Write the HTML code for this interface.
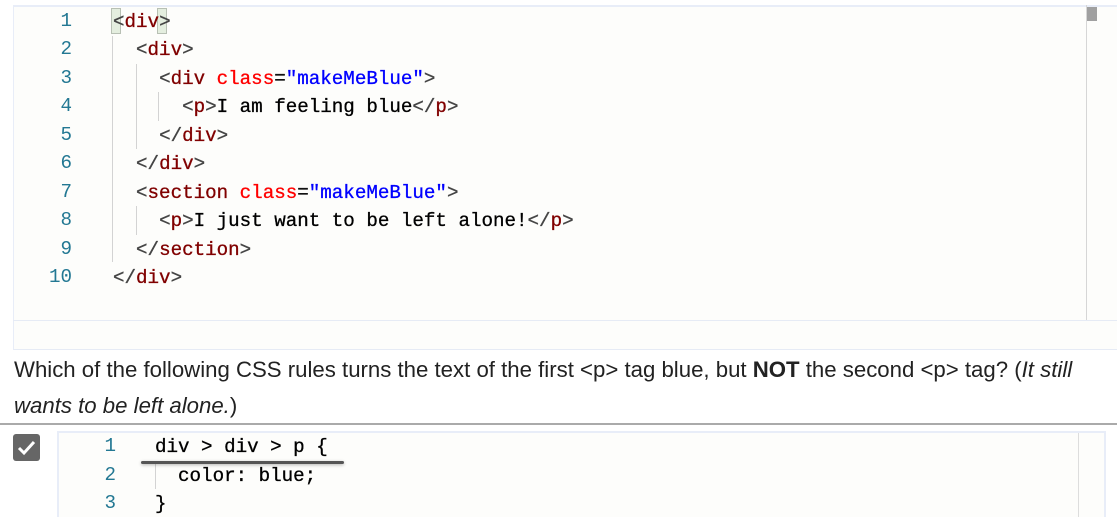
<!DOCTYPE html>
<html><head><meta charset="utf-8"><style>
body{margin:0;width:1117px;height:517px;background:#fff;position:relative;overflow:hidden;font-family:"Liberation Sans",sans-serif}
.ed{position:absolute;left:13px;top:5px;width:1104px;height:345px;background:#fdfdfb;border-top:2px solid #e8edf8;border-left:1px solid #e8edf8;border-bottom:1px solid #e6ebf5;box-sizing:border-box}
.sb{position:absolute;left:1086px;top:5px;width:1px;height:315px;background:#d6d6d6}
.th{position:absolute;left:1087px;top:7px;width:10px;height:14px;background:#a0a0a0}
.hl{position:absolute;left:13px;top:320px;width:1104px;height:1px;background:#e6ebf5}
.ln{position:absolute;width:40px;text-align:right;color:#237893;font:19.2px "Liberation Mono",monospace}
.cd{position:absolute;font:19.2px "Liberation Mono",monospace;color:#000;white-space:pre;line-height:24px;-webkit-text-stroke:0.3px currentColor}
.b{color:#444}.t{color:#800000}.a{color:#f00}.s{color:#00f}
.g{position:absolute;width:1px;background:#d3d3d3}
.q{position:absolute;left:14px;font-size:22.2px;color:#222;white-space:nowrap;letter-spacing:0}
.ed2{position:absolute;left:57px;top:431px;width:1049px;height:86px;background:#fdfdfb;border:2px solid #e8edf8;border-bottom:none;box-sizing:border-box}
</style></head><body>
<div class="ed"></div><div class="sb"></div><div class="th"></div><div class="hl"></div>
<div class="g" style="left:112px;top:36px;height:226px"></div>
<div class="g" style="left:136px;top:64px;height:85px"></div>
<div class="g" style="left:136px;top:206px;height:29px"></div>
<div class="g" style="left:158px;top:92px;height:29px"></div>
<div style="position:absolute;left:111px;top:8px;width:10px;height:26px;background:#e4eedf;border:1px solid #b8c0b4;box-sizing:border-box"></div>
<div style="position:absolute;left:157px;top:8px;width:10px;height:26px;background:#e4eedf;border:1px solid #b8c0b4;box-sizing:border-box"></div>
<div class="ln" style="left:32px;top:10px">1</div>
<div class="ln" style="left:32px;top:38px">2</div>
<div class="ln" style="left:32px;top:67px">3</div>
<div class="ln" style="left:32px;top:95px">4</div>
<div class="ln" style="left:32px;top:124px">5</div>
<div class="ln" style="left:32px;top:152px">6</div>
<div class="ln" style="left:32px;top:181px">7</div>
<div class="ln" style="left:32px;top:209px">8</div>
<div class="ln" style="left:32px;top:238px">9</div>
<div class="ln" style="left:32px;top:266px">10</div>
<div class="cd" style="left:113px;top:10px"><span class="b">&lt;</span><span class="t">div</span><span class="b">&gt;</span></div>
<div class="cd" style="left:113px;top:38px">  <span class="b">&lt;</span><span class="t">div</span><span class="b">&gt;</span></div>
<div class="cd" style="left:113px;top:67px">    <span class="b">&lt;</span><span class="t">div</span> <span class="a">class</span>=<span class="s">"makeMeBlue"</span><span class="b">&gt;</span></div>
<div class="cd" style="left:113px;top:95px">      <span class="b">&lt;</span><span class="t">p</span><span class="b">&gt;</span>I am feeling blue<span class="b">&lt;/</span><span class="t">p</span><span class="b">&gt;</span></div>
<div class="cd" style="left:113px;top:124px">    <span class="b">&lt;/</span><span class="t">div</span><span class="b">&gt;</span></div>
<div class="cd" style="left:113px;top:152px">  <span class="b">&lt;/</span><span class="t">div</span><span class="b">&gt;</span></div>
<div class="cd" style="left:113px;top:181px">  <span class="b">&lt;</span><span class="t">section</span> <span class="a">class</span>=<span class="s">"makeMeBlue"</span><span class="b">&gt;</span></div>
<div class="cd" style="left:113px;top:209px">    <span class="b">&lt;</span><span class="t">p</span><span class="b">&gt;</span>I just want to be left alone!<span class="b">&lt;/</span><span class="t">p</span><span class="b">&gt;</span></div>
<div class="cd" style="left:113px;top:238px">  <span class="b">&lt;/</span><span class="t">section</span><span class="b">&gt;</span></div>
<div class="cd" style="left:113px;top:266px"><span class="b">&lt;/</span><span class="t">div</span><span class="b">&gt;</span></div>
<div class="q" style="top:357px">Which of the following CSS rules turns the text of the first &lt;p&gt; tag blue, but <b>NOT</b> the second &lt;p&gt; tag? (<i>It still</i></div>
<div class="q" style="top:393px"><i>wants to be left alone.</i>)</div>
<div style="position:absolute;left:0;top:423px;width:1117px;height:2px;background:#aaa"></div>
<div class="ed2"></div>
<div style="position:absolute;left:1078px;top:433px;width:1px;height:84px;background:#ddd"></div>
<div style="position:absolute;left:13px;top:434px;width:27px;height:27px;background:#666;border-radius:3px"></div>
<svg style="position:absolute;left:13px;top:434px" width="27" height="27"><path d="M6 14 L11 19 L21 8" stroke="#fff" stroke-width="3" fill="none"/></svg>
<div class="g" style="left:155px;top:462px;height:27px"></div>
<div class="ln" style="left:76px;top:435px">1</div>
<div class="ln" style="left:76px;top:464px">2</div>
<div class="ln" style="left:76px;top:492px">3</div>
<div class="cd" style="left:155px;top:435px">div &gt; div &gt; p {</div>
<div class="cd" style="left:155px;top:464px">  color: blue;</div>
<div class="cd" style="left:155px;top:492px">}</div>
<div style="position:absolute;left:141px;top:461px;width:203px;height:3px;background:#555;border-radius:2px;box-shadow:0 1px 3px rgba(0,0,0,.3)"></div>
</body></html>
